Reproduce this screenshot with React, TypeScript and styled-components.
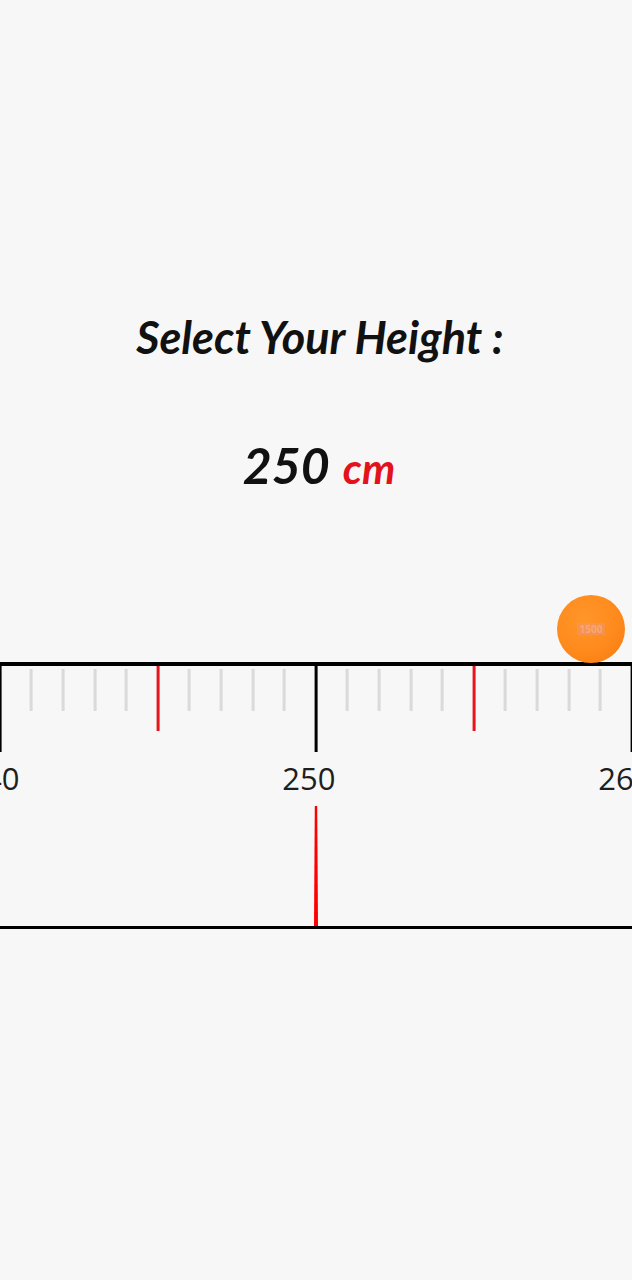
import React from 'react'
import styled, { createGlobalStyle } from 'styled-components'

const GlobalStyle = createGlobalStyle`
  html, body {
    margin: 0;
    padding: 0;
    background: #f7f7f7;
  }
  * {
    box-sizing: border-box;
  }
`

const UNIT = 31.6
const FIRST = 239
const LAST = 261
const CURRENT = 250

type Kind = 'major' | 'mid' | 'minor'

const kindOf = (v: number): Kind => (v % 10 === 0 ? 'major' : v % 5 === 0 ? 'mid' : 'minor')

const App = () => {
  const values: number[] = []
  for (let v = FIRST; v <= LAST; v++) values.push(v)
  const offset = -((CURRENT - FIRST) * UNIT + UNIT / 2 - 316)

  return (
    <Page>
      <GlobalStyle />
      <Title>Select Your Height :</Title>
      <Value>
        <Number>{CURRENT}</Number>
        <Unit>cm</Unit>
      </Value>

      <FabRow>
        <Fab>
          <FabText>1500</FabText>
        </Fab>
      </FabRow>

      <Ruler>
        <Line />
        <Strip>
          <Track style={{ transform: `translateX(${offset}px)` }}>
            {values.map((v) => {
              const kind = kindOf(v)
              return (
                <Cell key={v}>
                  <TickArea>
                    <Tick kind={kind} />
                  </TickArea>
                  <Label>{kind === 'major' ? v : ''}</Label>
                </Cell>
              )
            })}
          </Track>
        </Strip>
        <Pointer />
        <Line thin />
      </Ruler>
    </Page>
  )
}

export default App

const Page = styled.div`
  min-height: 100vh;
  width: 100%;
  display: flex;
  flex-direction: column;
  align-items: center;
  padding-top: 309px;
  overflow: hidden;
`

const Title = styled.h1`
  margin: 0;
  font-family: Lato, 'Open Sans', sans-serif;
  font-style: italic;
  font-weight: 700;
  font-size: 45px;
  line-height: 56px;
  letter-spacing: 0;
  color: #111;
  padding-left: 8px;
  white-space: nowrap;
`

const Value = styled.div`
  margin-top: 72px;
  height: 56px;
  display: flex;
  align-items: baseline;
  gap: 13px;
  font-family: Lato, 'Open Sans', sans-serif;
  font-style: italic;
  line-height: 56px;
  padding-left: 6px;
`

const Number = styled.span`
  font-size: 50px;
  font-weight: 700;
  color: #111;
`

const Unit = styled.span`
  font-size: 42px;
  font-weight: 700;
  color: #e3121b;
`

const FabRow = styled.div`
  width: 100%;
  margin-top: 102px;
  display: flex;
  justify-content: flex-end;
  padding-right: 7px;
  position: relative;
  z-index: 2;
  margin-bottom: -1px;
`

const Fab = styled.div`
  width: 68px;
  height: 68px;
  border-radius: 50%;
  background: radial-gradient(circle at 40% 35%, #ff962a 0%, #ff8a1c 55%, #f5770f 100%);
  display: flex;
  align-items: center;
  justify-content: center;
`

const FabText = styled.span`
  font-family: 'Open Sans', sans-serif;
  font-size: 10px;
  font-weight: 700;
  color: #f6a878;
  background: rgba(240, 150, 110, 0.55);
  padding: 0 3px;
  line-height: 12px;
`

const Ruler = styled.div`
  width: 100%;
  display: flex;
  flex-direction: column;
  align-items: center;
`

const Line = styled.div<{ thin?: boolean }>`
  width: 100%;
  height: ${(p) => (p.thin ? 3 : 4)}px;
  background: #000;
`

const Strip = styled.div`
  width: 100%;
  overflow: hidden;
`

const Track = styled.div`
  display: flex;
  width: max-content;
`

const Cell = styled.div`
  width: ${UNIT}px;
  display: flex;
  flex-direction: column;
  align-items: center;
`

const TickArea = styled.div`
  height: 86px;
  display: flex;
  justify-content: center;
`

const Tick = styled.div<{ kind: Kind }>`
  width: 3px;
  height: ${(p) => (p.kind === 'major' ? 86 : p.kind === 'mid' ? 65 : 42)}px;
  margin-top: ${(p) => (p.kind === 'minor' ? 3 : 0)}px;
  background: ${(p) => (p.kind === 'major' ? '#000' : p.kind === 'mid' ? '#e8141c' : '#dadada')};
`

const Label = styled.div`
  height: 52px;
  display: flex;
  justify-content: center;
  white-space: nowrap;
  margin-right: 14px;
  font-family: 'Open Sans', sans-serif;
  font-size: 31px;
  line-height: 52px;
  color: #1e1e1e;
`

const Pointer = styled.div`
  width: 4px;
  height: 120px;
  margin-top: 2px;
  background: #f00;
  clip-path: polygon(20% 0, 80% 0, 100% 100%, 0 100%);
`
